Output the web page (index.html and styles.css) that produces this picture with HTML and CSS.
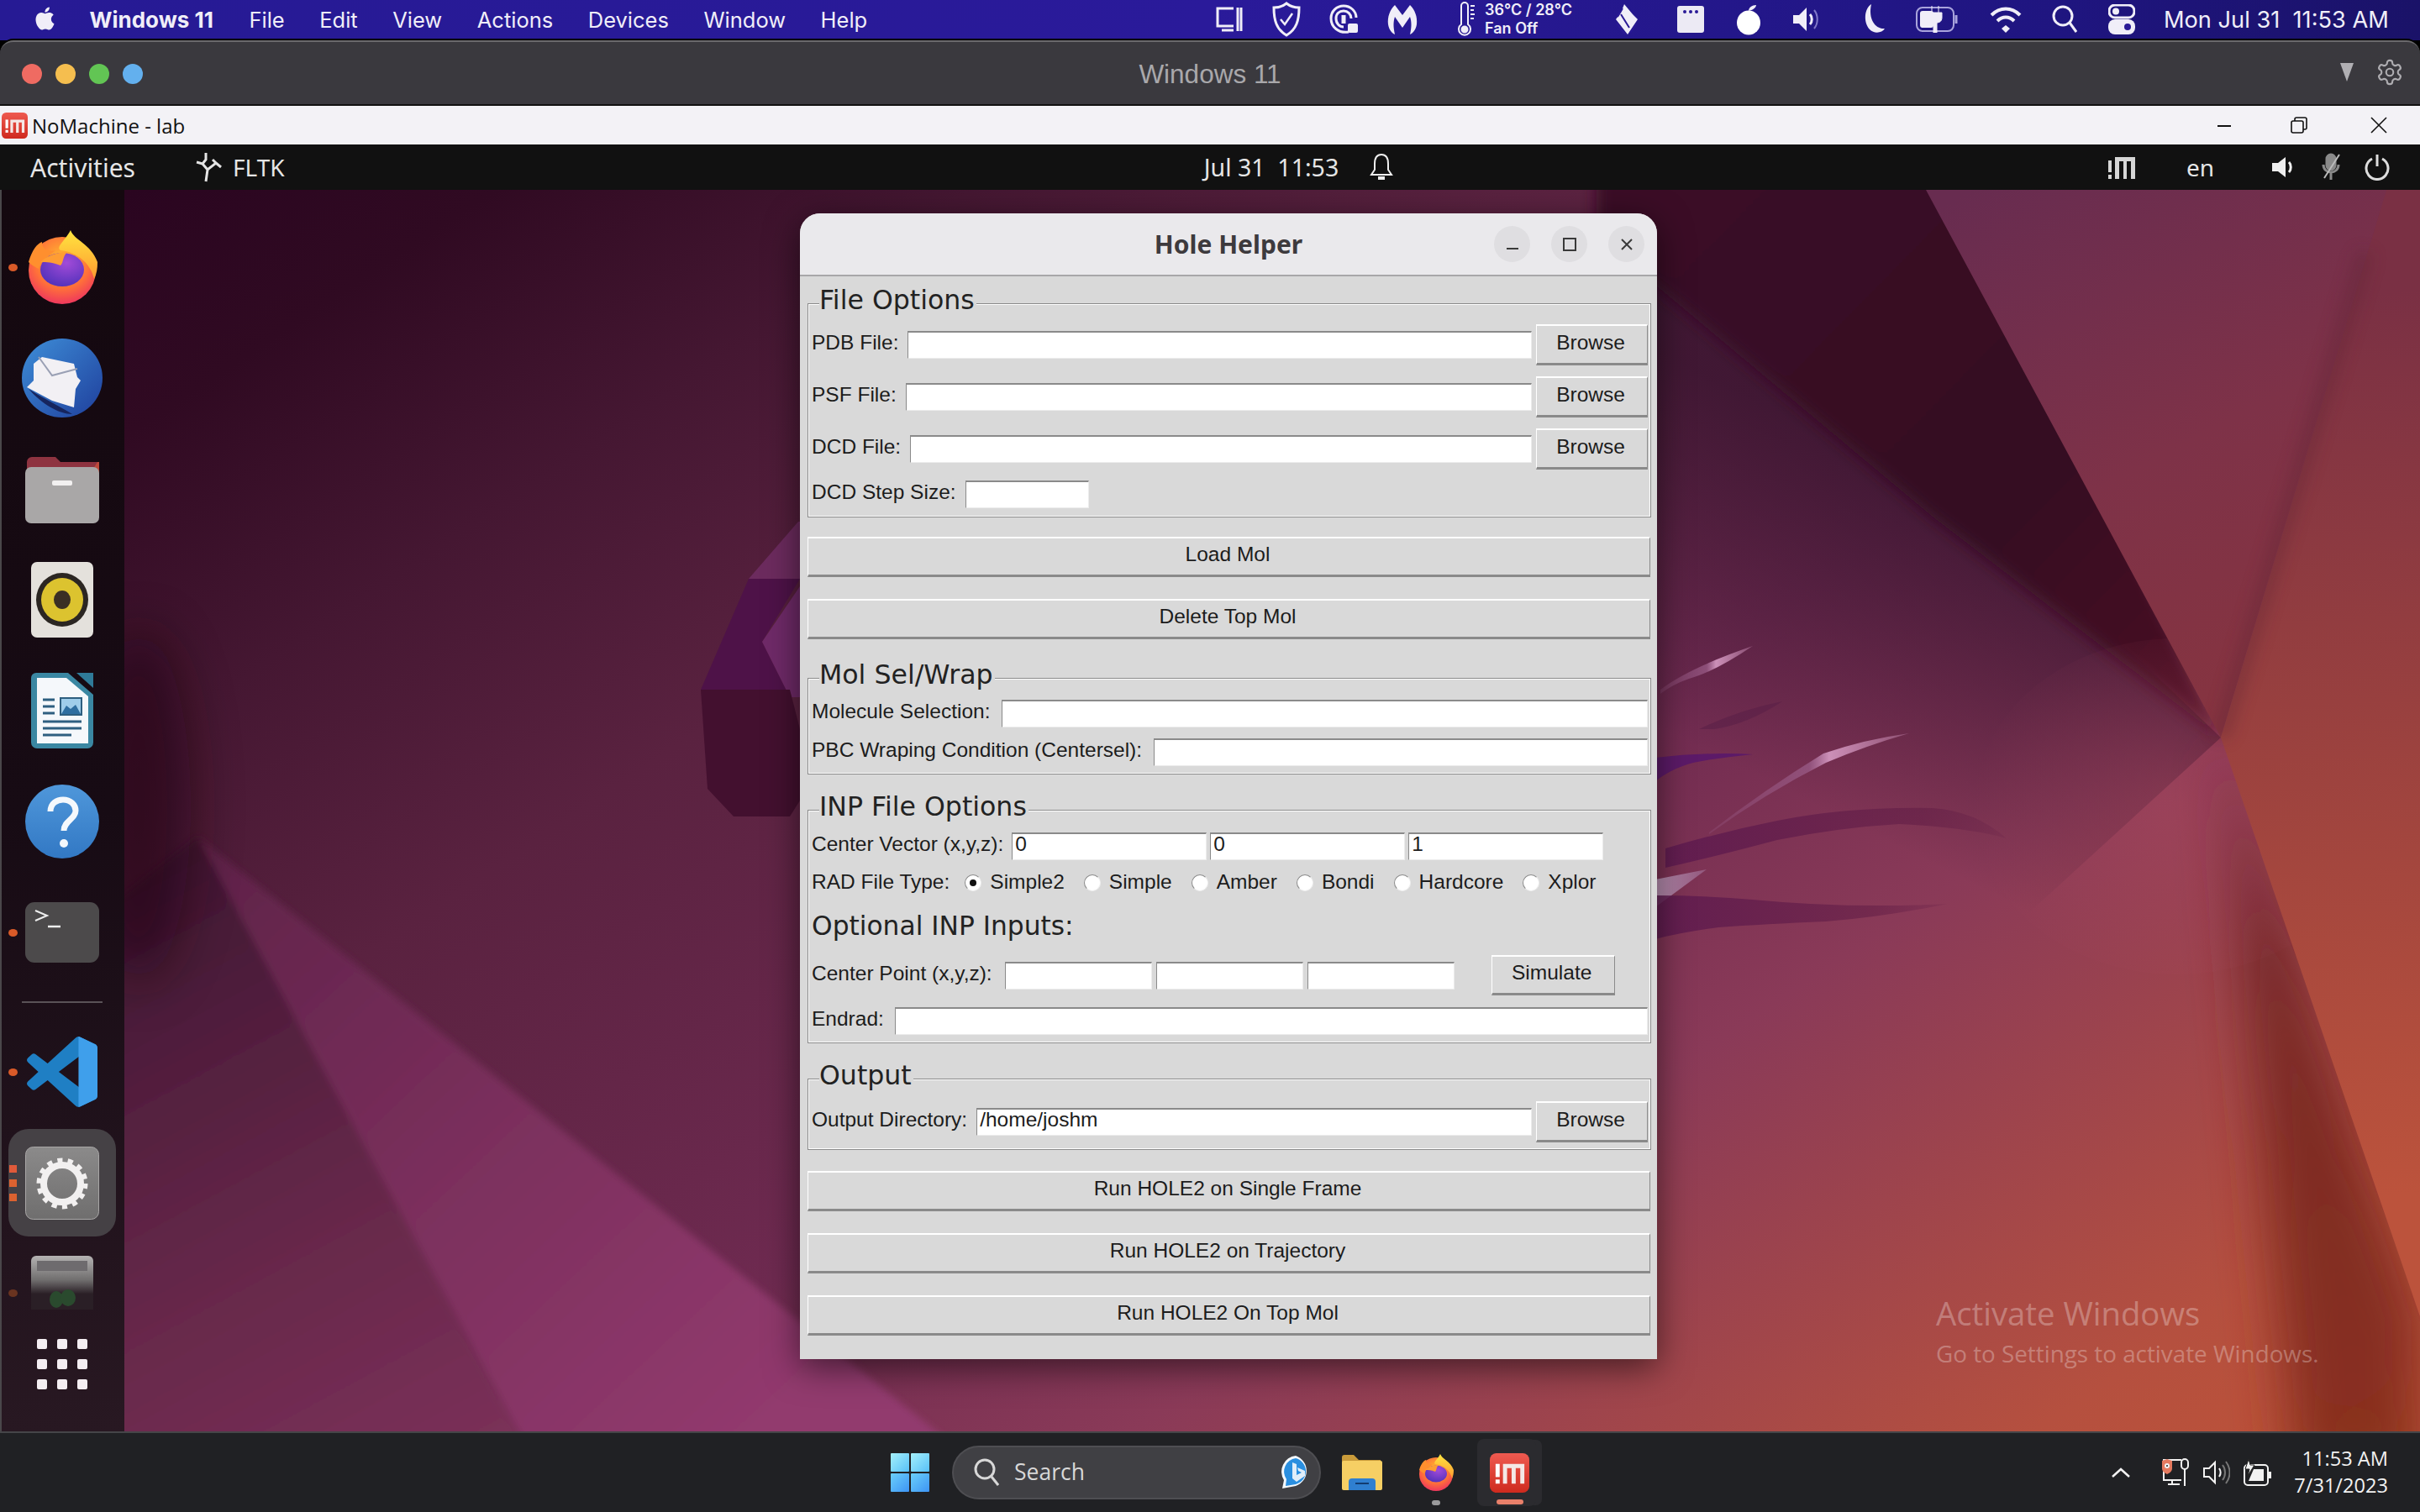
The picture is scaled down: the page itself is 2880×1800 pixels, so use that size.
FILE: index.html
```html
<!DOCTYPE html>
<html lang="en">
<head>
<meta charset="utf-8">
<title>Hole Helper</title>
<link rel="stylesheet" href="styles.css">
</head>
<body>
<svg class="defs" width="0" height="0" aria-hidden="true">
  <defs>
    <linearGradient id="nmRed" x1="0" y1="0" x2="0" y2="1"><stop offset="0" stop-color="#ee5a50"/><stop offset="1" stop-color="#cf2a1e"/></linearGradient>
    <radialGradient id="ffBody" cx=".5" cy=".35" r=".75"><stop offset="0" stop-color="#ffc02e"/><stop offset=".55" stop-color="#ff7139"/><stop offset="1" stop-color="#e8206c"/></radialGradient>
    <linearGradient id="ffFlare" x1="0" y1="0" x2="0" y2="1"><stop offset="0" stop-color="#ffe640"/><stop offset="1" stop-color="#ff9a30"/></linearGradient>
    <radialGradient id="ffCore" cx=".6" cy=".3" r=".8"><stop offset="0" stop-color="#a24bd8"/><stop offset="1" stop-color="#4b2fb8"/></radialGradient>
    <symbol id="nomachine" viewBox="0 0 48 48">
      <rect x="0" y="0" width="48" height="48" rx="8" fill="url(#nmRed)"/>
      <rect x="7" y="13" width="5" height="16" fill="#fff"/><rect x="7" y="32" width="5" height="5" fill="#fff"/>
      <path d="M16 13H42V37H37V18H31.5V37H26.5V18H21V37H16Z" fill="#f4e8e6"/>
    </symbol>
    <symbol id="firefox" viewBox="0 0 84 88">
      <circle cx="42" cy="48" r="40" fill="url(#ffBody)"/>
      <path d="M52 0C56 12 76 16 84 38C84 46 83 52 80 58C76 40 60 26 40 24C34 20 46 12 52 0Z" fill="url(#ffFlare)"/>
      <path d="M2 38C6 24 12 16 18 14C18 22 24 26 34 24C26 30 18 36 14 46C10 44 6 42 2 38Z" fill="#ff8f2e"/>
      <ellipse cx="42" cy="47" rx="26" ry="20" fill="url(#ffCore)"/>
      <path d="M16 38C24 30 38 26 48 26C42 32 44 38 40 42C30 38 24 38 16 38Z" fill="#ff9d33"/>
    </symbol>
  </defs>
</svg>

<div class="screen">
  <header class="menubar">
    <nav class="app-menu">
      <svg class="apple" width="27" height="32" viewBox="0 0 24 24"><path fill="#f0eef8" d="M12.152 6.896c-.948 0-2.415-1.078-3.96-1.04-2.04.027-3.91 1.183-4.961 3.014-2.117 3.675-.546 9.103 1.519 12.09 1.013 1.454 2.208 3.09 3.792 3.039 1.52-.065 2.09-.987 3.935-.987 1.831 0 2.35.987 3.96.948 1.637-.026 2.676-1.48 3.676-2.948 1.156-1.688 1.636-3.325 1.662-3.415-.039-.013-3.182-1.221-3.22-4.857-.026-3.04 2.48-4.494 2.597-4.559-1.429-2.09-3.623-2.324-4.39-2.376-2-.156-3.675 1.09-4.61 1.09zM15.53 3.83c.843-1.012 1.4-2.427 1.245-3.83-1.207.052-2.662.805-3.532 1.818-.78.896-1.454 2.338-1.273 3.714 1.338.104 2.715-.688 3.559-1.701"/></svg>
      <span class="app-name">Windows 11</span>
      <span>File</span><span>Edit</span><span>View</span><span>Actions</span><span>Devices</span><span>Window</span><span>Help</span>
    </nav>
    <div class="status-strip">
      <svg width="36" height="36" viewBox="0 0 36 36" fill="none" stroke="#f0eef8" stroke-width="3"><path d="M24 5H5V26H24"/><path d="M29 4V32M33 4V32"/><path d="M10 31H24"/></svg>
      <svg width="36" height="42" viewBox="0 0 36 42" fill="none" stroke="#f0eef8" stroke-width="3"><path d="M18 2C23 6 28 7 33 7C33 22 30 33 18 40C6 33 3 22 3 7C8 7 13 6 18 2Z"/><path d="M11 21L16 27L25 14" stroke-width="2.5"/></svg>
      <svg width="36" height="38" viewBox="0 0 36 38" fill="none" stroke="#f0eef8" stroke-width="3"><path d="M24 34C12 36 3 28 3 18C3 9 10 3 18 3C26 3 33 9 33 17"/><path d="M18 28C13 28 9 24 9 18C9 12 13 9 18 9C23 9 27 13 27 18"/><path d="M18 14V24" stroke-width="5"/><rect x="23" y="24" width="12" height="11" rx="2" fill="#f0eef8" stroke="none"/></svg>
      <svg width="38" height="38" viewBox="0 0 38 38"><path fill="#f0eef8" d="M10 2L19 14L28 2C34 8 37 16 36 25C35 31 32 35 28 37C30 28 30 22 28 16L19 29L10 16C8 22 8 28 10 37C6 35 3 31 2 25C1 16 4 8 10 2Z"/></svg>
      <div class="temp-group">
        <svg width="22" height="42" viewBox="0 0 22 42" fill="none" stroke="#f0eef8" stroke-width="2"><path d="M5 27V5A4 4 0 0 1 13 5V27A7 7 0 1 1 5 27Z"/><circle cx="9" cy="33" r="3.5" fill="#f0eef8"/><path d="M16 5H21M16 10H20M16 15H21M16 20H20"/></svg>
        <div class="temp-text"><span>36°C / 28°C</span><span>Fan Off</span></div>
      </div>
      <svg width="34" height="40" viewBox="0 0 34 40"><path fill="#f0eef8" d="M14 2L24 14L30 20L18 38L4 20L10 12Z"/><path d="M5 25L15 38M12 7L6 17M28 26L21 36M10 14L20 30" stroke="#2a1a96" stroke-width="2" fill="none"/></svg>
      <svg width="32" height="32" viewBox="0 0 32 32"><rect width="32" height="32" rx="3" fill="#eceaf4"/><circle cx="9" cy="7" r="2" fill="#2a1a96"/><circle cx="16" cy="7" r="2" fill="#2a1a96"/><circle cx="23" cy="7" r="2" fill="#2a1a96"/></svg>
      <svg width="30" height="38" viewBox="0 0 30 38"><ellipse cx="15" cy="23" rx="14" ry="14.5" fill="#fff"/><path d="M15 9C15 5 19 2 24 2C24 5 20 8 15 9Z" fill="#f0eef8"/></svg>
      <svg width="38" height="32" viewBox="0 0 38 32"><path fill="#f0eef8" d="M2 11H9L18 2V30L9 21H2Z"/><path d="M22 10C25 13 25 19 22 22" fill="none" stroke="#f0eef8" stroke-width="3"/><path d="M27 5C32 11 32 21 27 27" fill="none" stroke="#8078c8" stroke-width="2"/></svg>
      <svg width="30" height="38" viewBox="0 0 30 38"><path fill="#f0eef8" d="M13 1C5 6 3 22 11 31C17 37 26 35 29 30C18 31 9 19 13 1Z"/></svg>
      <svg width="52" height="32" viewBox="0 0 52 32" fill="none"><rect x="1" y="2" width="44" height="28" rx="7" stroke="#a9a4dc" stroke-width="2"/><path d="M48 11V21" stroke="#a9a4dc" stroke-width="3"/><rect x="5" y="6" width="16" height="20" rx="3" fill="#f0eef8"/><path d="M19 0V8M27 0V8M15 8H31V14C31 19 27 20 25 20V32H21V20C19 20 15 19 15 14Z" fill="#f0eef8" stroke="#f0eef8"/></svg>
      <svg width="38" height="32" viewBox="0 0 38 32" fill="none" stroke="#f0eef8" stroke-width="4"><path d="M2 11C12 1 26 1 36 11"/><path d="M9 18C15 12 23 12 29 18"/><path d="M19 23L24 27L19 32L14 27Z" fill="#f0eef8" stroke="none"/></svg>
      <svg width="30" height="34" viewBox="0 0 30 34" fill="none" stroke="#f0eef8" stroke-width="3"><circle cx="13" cy="13" r="11"/><path d="M21 21L29 32"/></svg>
      <svg width="32" height="36" viewBox="0 0 32 36"><rect x="1" y="1" width="30" height="15" rx="7" fill="none" stroke="#f0eef8" stroke-width="3"/><circle cx="9" cy="8.5" r="4" fill="#f0eef8"/><rect y="18" width="32" height="18" rx="8" fill="#f0eef8"/><circle cx="23" cy="27" r="4" fill="#2a1a96"/></svg>
      <span class="clock">Mon Jul 31  11:53 AM</span>
    </div>
  </header>

  <div class="vm-titlebar">
    <div class="traffic">
      <span class="light light-red"></span><span class="light light-amber"></span><span class="light light-green"></span><span class="light light-blue"></span>
    </div>
    <span class="vm-title">Windows 11</span>
    <div class="vm-tools">
      <svg width="16" height="22" viewBox="0 0 16 22"><path d="M0 0H16L8 22Z" fill="#b0afb3"/></svg>
      <svg width="34" height="34" viewBox="0 0 24 24" fill="none" stroke="#aeadb1" stroke-width="1.5"><path d="M12.22 2h-.44a2 2 0 0 0-2 2v.18a2 2 0 0 1-1 1.73l-.43.25a2 2 0 0 1-2 0l-.15-.08a2 2 0 0 0-2.73.73l-.22.38a2 2 0 0 0 .73 2.73l.15.1a2 2 0 0 1 1 1.72v.51a2 2 0 0 1-1 1.74l-.15.09a2 2 0 0 0-.73 2.73l.22.38a2 2 0 0 0 2.73.73l.15-.08a2 2 0 0 1 2 0l.43.25a2 2 0 0 1 1 1.73V20a2 2 0 0 0 2 2h.44a2 2 0 0 0 2-2v-.18a2 2 0 0 1 1-1.73l.43-.25a2 2 0 0 1 2 0l.15.08a2 2 0 0 0 2.73-.73l.22-.39a2 2 0 0 0-.73-2.73l-.15-.08a2 2 0 0 1-1-1.74v-.5a2 2 0 0 1 1-1.74l.15-.09a2 2 0 0 0 .73-2.73l-.22-.38a2 2 0 0 0-2.73-.73l-.15.08a2 2 0 0 1-2 0l-.43-.25a2 2 0 0 1-1-1.73V4a2 2 0 0 0-2-2z"/><circle cx="12" cy="12" r="3"/></svg>
    </div>
  </div>

  <div class="nm-titlebar">
    <svg width="31" height="31" class="nm-icon"><use href="#nomachine"/></svg>
    <span class="nm-title">NoMachine - lab</span>
    <div class="nm-controls">
      <svg width="20" height="20" viewBox="0 0 20 20"><path d="M2 11H18" stroke="#111" stroke-width="2"/></svg>
      <svg class="nm-restore" width="20" height="20" viewBox="0 0 20 20" fill="none" stroke="#111" stroke-width="1.6"><rect x="1" y="5" width="14" height="14" rx="2"/><path d="M5 5V3A2 2 0 0 1 7 1H17A2 2 0 0 1 19 3V13A2 2 0 0 1 17 15H15"/></svg>
      <svg width="20" height="20" viewBox="0 0 20 20" stroke="#111" stroke-width="1.6"><path d="M1 1L19 19M19 1L1 19"/></svg>
    </div>
  </div>

  <div class="gnome-bar">
    <div class="gnome-left">
      <span class="activities">Activities</span>
      <span class="gnome-app">
        <svg width="34" height="36" viewBox="0 0 34 36" stroke="#e4e4e4" stroke-width="3" fill="none"><path d="M14 1V9L10 14L3 12M10 14L16 21L26 13L32 18M16 21L14 35M26 13L22 9"/></svg>
        FLTK
      </span>
    </div>
    <div class="gnome-center">
      <span class="gnome-clock">Jul 31  11:53</span>
      <svg width="30" height="34" viewBox="0 0 30 34" fill="none" stroke="#eee" stroke-width="2"><path d="M15 2C9 2 7 7 7 13V20L3 26H27L23 20V13C23 7 21 2 15 2Z"/><path d="M11 30H19" stroke-width="4"/></svg>
    </div>
    <div class="gnome-right">
      <svg width="32" height="32" viewBox="0 0 32 32"><rect x="0" y="8" width="4" height="14" fill="#d6d6d6"/><rect x="0" y="25" width="4" height="5" fill="#d6d6d6"/><path d="M8 4H32V30H27V9H22V30H18V9H13V30H8Z" fill="#d6d6d6"/></svg>
      <span class="lang">en</span>
      <svg width="32" height="32" viewBox="0 0 32 32"><path fill="#eee" d="M2 11H9L18 4V28L9 21H2Z"/><path d="M22 10C25 13 25 19 22 22" fill="none" stroke="#eee" stroke-width="3"/></svg>
      <svg width="24" height="34" viewBox="0 0 24 34" fill="none" stroke="#8a8a8a" stroke-width="3"><rect x="7" y="2" width="10" height="18" rx="5" fill="#8a8a8a"/><path d="M3 14C3 26 21 26 21 14M12 24V32"/><path d="M22 2L4 30" stroke="#bbb" stroke-width="2"/></svg>
      <svg width="30" height="32" viewBox="0 0 30 32" fill="none" stroke="#ddd" stroke-width="3"><path d="M9 6A13 13 0 1 0 21 6"/><path d="M15 1V15"/></svg>
    </div>
  </div>

  <main class="desktop">
    <svg class="wallpaper" viewBox="0 226 2880 1478" preserveAspectRatio="none" aria-hidden="true">
      <defs>
        <linearGradient id="wpBase" gradientUnits="userSpaceOnUse" x1="150" y1="226" x2="1650" y2="2476">
          <stop offset="0" stop-color="#2a0520"/><stop offset=".09" stop-color="#300a22"/><stop offset=".207" stop-color="#451732"/><stop offset=".338" stop-color="#5a2240"/><stop offset=".556" stop-color="#6e2a50"/><stop offset=".7" stop-color="#8a3a58"/><stop offset=".92" stop-color="#b5503f"/><stop offset="1" stop-color="#bc5238"/>
        </linearGradient>
        <linearGradient id="wpBand" gradientUnits="userSpaceOnUse" x1="235" y1="996" x2="900" y2="1704"><stop offset="0" stop-color="#5e2248"/><stop offset=".5" stop-color="#7a2f5c"/><stop offset="1" stop-color="#923a6e"/></linearGradient>
        <linearGradient id="wpLow" gradientUnits="userSpaceOnUse" x1="220" y1="1000" x2="600" y2="1704"><stop offset="0" stop-color="#3f1632"/><stop offset=".6" stop-color="#66284a"/><stop offset="1" stop-color="#7a3058"/></linearGradient>
        <linearGradient id="wpWedge" gradientUnits="userSpaceOnUse" x1="2000" y1="240" x2="2640" y2="870"><stop offset="0" stop-color="#3a1028"/><stop offset=".6" stop-color="#350f20"/><stop offset="1" stop-color="#4c1020"/></linearGradient>
        <linearGradient id="wpShade" gradientUnits="userSpaceOnUse" x1="2200" y1="530" x2="2020" y2="890"><stop offset="0" stop-color="#3a1530" stop-opacity=".85"/><stop offset="1" stop-color="#3a1530" stop-opacity="0"/></linearGradient>
        <linearGradient id="wpFacetA" gradientUnits="userSpaceOnUse" x1="2320" y1="240" x2="2640" y2="860"><stop offset="0" stop-color="#682c50"/><stop offset=".55" stop-color="#7e3248"/><stop offset="1" stop-color="#863440"/></linearGradient>
        <linearGradient id="wpFacetB" gradientUnits="userSpaceOnUse" x1="2800" y1="350" x2="2880" y2="1420"><stop offset="0" stop-color="#7a3044"/><stop offset=".45" stop-color="#98403f"/><stop offset="1" stop-color="#bc533c"/></linearGradient>
        <linearGradient id="wpCrease" gradientUnits="userSpaceOnUse" x1="2650" y1="900" x2="2850" y2="1700"><stop offset="0" stop-color="#5a1c2a"/><stop offset=".4" stop-color="#7a2a26"/><stop offset="1" stop-color="#8a301f"/></linearGradient>
        <radialGradient id="wpGlow" gradientUnits="userSpaceOnUse" cx="2590" cy="960" r="240"><stop offset="0" stop-color="#ac4a60" stop-opacity=".4"/><stop offset="1" stop-color="#ac4a60" stop-opacity="0"/></radialGradient>
        <linearGradient id="fDark" x1="0" y1="0" x2="1" y2="0"><stop offset="0" stop-color="#5e1a50" stop-opacity=".85"/><stop offset=".75" stop-color="#5e1a44" stop-opacity=".5"/><stop offset="1" stop-color="#5e1a44" stop-opacity=".15"/></linearGradient>
        <linearGradient id="fLight" x1="0" y1="0" x2="1" y2="0"><stop offset="0" stop-color="#9a5c88" stop-opacity=".25"/><stop offset=".5" stop-color="#9a5c88" stop-opacity=".75"/><stop offset=".6" stop-color="#cc90b8"/><stop offset="1" stop-color="#cc90b8" stop-opacity=".35"/></linearGradient>
        <linearGradient id="fPale" x1="0" y1="0" x2="1" y2="0"><stop offset="0" stop-color="#ba92b4"/><stop offset="1" stop-color="#a87ca4" stop-opacity=".5"/></linearGradient>
        <filter id="blurT" filterUnits="userSpaceOnUse" x="0" y="0" width="2880" height="1800"><feGaussianBlur stdDeviation="4"/></filter>
        <filter id="blurS" filterUnits="userSpaceOnUse" x="0" y="0" width="2880" height="1800"><feGaussianBlur stdDeviation="9"/></filter>
        <filter id="blurL" filterUnits="userSpaceOnUse" x="0" y="0" width="2880" height="1800"><feGaussianBlur stdDeviation="30"/></filter>
      </defs>
      <rect x="0" y="226" width="2880" height="1478" fill="url(#wpBase)"/>
      <g filter="url(#blurT)">
        <polygon points="235,996 615,1704 615,1780 0,1780 0,1180" fill="url(#wpLow)"/>
        <polygon points="235,996 1190,1765 650,1765" fill="url(#wpBand)"/>
      </g>
      <ellipse cx="165" cy="960" rx="62" ry="210" fill="#1c0510" opacity=".55" filter="url(#blurL)"/>
      <polygon points="891,689 950,621 960,621 960,689" fill="#6c2b5e"/>
      <polygon points="891,689 952,689 907,764 940,830 834,821" fill="#4e1248"/>
      <polygon points="907,764 952,698 952,830 940,830" fill="#6f2a68"/>
      <polygon points="834,821 940,821 952,868 952,953 940,972 873,972 842,939" fill="#43102f"/>
      <polygon points="1960,226 2643,878 2400,1100 1960,1100" fill="url(#wpShade)"/>
      <polygon points="1900,100 2292,100 2643,878 2300,615 1970,339 1900,300" fill="url(#wpWedge)" filter="url(#blurS)"/>
      <polygon points="2643,878 2880,1567 2880,1760 2730,1760" fill="url(#wpCrease)" filter="url(#blurL)"/>
      <ellipse cx="2590" cy="960" rx="240" ry="200" fill="url(#wpGlow)"/>
      <polygon points="2292,226 2840,226 2643,878" fill="url(#wpFacetA)"/>
      <polygon points="2840,226 2880,226 2880,1567 2643,878" fill="url(#wpFacetB)"/>
      <path d="M2643 878L2815 300" stroke="#5c2030" stroke-width="20" opacity=".35" filter="url(#blurS)"/>
      <path d="M1976 821Q2010 795 2086 769Q2040 800 2010 808Q1990 815 1976 826Z" fill="url(#fLight)"/>
      <path d="M2022 868Q2070 845 2121 835Q2080 862 2040 868Z" fill="#5a1f48" opacity=".6"/>
      <path d="M1970 902Q2030 895 2086 898Q2020 905 2005 911Q1985 918 1970 930Z" fill="#5c1a68"/>
      <path d="M2034 991Q2100 940 2170 897Q2220 880 2272 873Q2220 888 2173 908Q2100 945 2034 993Z" fill="url(#fLight)"/>
      <path d="M1982 1010Q2050 990 2115 977Q2200 960 2300 962Q2350 965 2388 998Q2340 985 2260 981Q2190 985 2115 1000Q2040 1020 1982 1033Z" fill="url(#fDark)"/>
      <path d="M1970 1047L2031 1035L1970 1080Z" fill="url(#fPale)"/>
      <path d="M1970 1066Q2030 1066 2086 1071Q2200 1082 2318 1076Q2240 1092 2173 1097Q2100 1100 2045 1104Q2000 1110 1970 1118Z" fill="url(#fDark)"/>
    </svg>

    <aside class="dock">
      <div class="dock-item has-dot">
        <svg width="84" height="88"><use href="#firefox"/></svg>
      </div>
      <div class="dock-item">
        <svg width="96" height="94" viewBox="0 0 96 94"><defs><linearGradient id="tbBlue" x1="0" y1="0" x2="1" y2="1"><stop offset="0" stop-color="#3e8ed8"/><stop offset="1" stop-color="#1f3f9c"/></linearGradient></defs><ellipse cx="48" cy="47" rx="48" ry="47" fill="url(#tbBlue)"/><path d="M14 30L24 22L62 30L66 46L70 50L64 60L62 82L36 74L6 58L14 50Z" fill="#f2f0f4"/><path d="M20 22L36 44L66 36" fill="none" stroke="#9aa0b4" stroke-width="2"/><path d="M8 60C24 78 44 90 60 90C48 82 30 74 8 60Z" fill="#16255e"/></svg>
      </div>
      <div class="dock-item">
        <svg width="88" height="81" viewBox="0 0 88 81"><path d="M2 8A6 6 0 0 1 8 2H36L42 8H88V24H2Z" fill="#8e3340"/><path d="M86 8H88V24H76Z" fill="#bd4a3c"/><rect y="14" width="88" height="67" rx="7" fill="#a9a7a7"/><rect x="32" y="30" width="24" height="6" rx="2" fill="#f2f0f0"/></svg>
      </div>
      <div class="dock-item">
        <svg width="74" height="90" viewBox="0 0 74 90"><rect width="74" height="90" rx="7" fill="#e4e1dc"/><ellipse cx="37" cy="45" rx="31" ry="32" fill="#2b2622"/><ellipse cx="37" cy="45" rx="25" ry="26" fill="#dcc32f"/><ellipse cx="37" cy="45" rx="10" ry="11" fill="#3a2f24"/></svg>
      </div>
      <div class="dock-item">
        <svg width="74" height="90" viewBox="0 0 74 90"><path d="M6 0H44L74 26V83A7 7 0 0 1 67 90H7A7 7 0 0 1 0 83V6A6 6 0 0 1 6 0Z" fill="#3a87a2"/><path d="M54 0H74V18Z" fill="#2f7a98"/><path d="M7 6H42L68 28V84H7Z" fill="#f5f8fb"/><path d="M14 32H28M14 40H28M14 48H28M14 58H60M14 66H60M14 74H48" stroke="#2e5f80" stroke-width="3"/><rect x="35" y="30" width="25" height="20" fill="#9fcdea" stroke="#2e5f80" stroke-width="2"/><path d="M36 49L42 39L47 43L53 38L59 49Z" fill="#2e6ea0"/></svg>
      </div>
      <div class="dock-item">
        <svg width="88" height="88" viewBox="0 0 88 88"><defs><linearGradient id="helpBlue" x1="0" y1="0" x2="0" y2="1"><stop offset="0" stop-color="#4f97da"/><stop offset="1" stop-color="#3278c4"/></linearGradient></defs><circle cx="44" cy="44" r="44" fill="url(#helpBlue)"/><path d="M30 32C30 22 38 18 45 18C54 18 60 24 60 31C60 41 46 43 46 55" fill="none" stroke="#f4f8fc" stroke-width="7"/><circle cx="46" cy="70" r="5" fill="#f4f8fc"/></svg>
      </div>
      <div class="dock-item has-dot">
        <svg width="88" height="72" viewBox="0 0 88 72"><rect width="88" height="72" rx="11" fill="#4c4a4b"/><path d="M12 10L26 16L12 22" fill="none" stroke="#eee" stroke-width="2"/><path d="M27 29H42" stroke="#eee" stroke-width="2.5"/></svg>
      </div>
      <div class="dock-sep"></div>
      <div class="dock-item has-dot">
        <svg width="84" height="84" viewBox="0 0 24 24"><defs><clipPath id="vsRight"><path d="M17.5 0H24V24H17.5Z"/></clipPath></defs><path fill="#1f7fc4" d="M23.15 2.587L18.21.21a1.494 1.494 0 0 0-1.705.29l-9.46 8.63-4.12-3.128a.999.999 0 0 0-1.276.057L.327 7.261A1 1 0 0 0 .326 8.74L3.899 12 .326 15.26a1 1 0 0 0 .001 1.479L1.65 17.94a.999.999 0 0 0 1.276.057l4.12-3.128 9.46 8.63a1.492 1.492 0 0 0 1.704.29l4.942-2.377A1.5 1.5 0 0 0 24 20.06V3.939a1.5 1.5 0 0 0-.85-1.352zm-5.146 14.861L10.826 12l7.178-5.448v10.896z"/><path clip-path="url(#vsRight)" fill="#3f9feb" d="M23.15 2.587L18.21.21a1.494 1.494 0 0 0-1.705.29L17.5 0V24L18.21 23.79 23.15 21.41A1.5 1.5 0 0 0 24 20.06V3.939a1.5 1.5 0 0 0-.85-1.352z"/></svg>
      </div>
      <div class="dock-item is-active has-dots">
        <span class="active-plate">
          <svg width="88" height="87" viewBox="0 0 88 87"><defs><linearGradient id="setBg" x1="0" y1="0" x2="0" y2="1"><stop offset="0" stop-color="#8b8a8a"/><stop offset="1" stop-color="#6f6e6e"/></linearGradient></defs><rect x=".5" y=".5" width="87" height="86" rx="9" fill="url(#setBg)" stroke="#a8a6a6"/><circle cx="44" cy="44" r="22" fill="none" stroke="#f2f0f0" stroke-width="8"/><circle cx="44" cy="44" r="27" fill="none" stroke="#f2f0f0" stroke-width="7" stroke-dasharray="6 6.12"/></svg>
        </span>
      </div>
      <div class="dock-item dock-item-trash has-dot dim-dot">
        <svg width="74" height="90" viewBox="0 0 74 90"><defs><linearGradient id="trashBg" x1="0" y1="0" x2="0" y2="1"><stop offset="0" stop-color="#b5b3b3"/><stop offset=".45" stop-color="#706e6e"/><stop offset=".71" stop-color="#2a1f26"/></linearGradient></defs><path d="M6 0H68A6 6 0 0 1 74 6V64H0V6A6 6 0 0 1 6 0Z" fill="url(#trashBg)"/><rect x="7" y="6" width="60" height="12" fill="#6e6b6e"/><ellipse cx="30" cy="52" rx="8" ry="10" fill="#2a4a2e"/><ellipse cx="44" cy="50" rx="9" ry="10" fill="#2a4a2e"/></svg>
      </div>
      <div class="app-grid"><i></i><i></i><i></i><i></i><i></i><i></i><i></i><i></i><i></i></div>
    </aside>

    <section class="tk-window">
      <header class="tk-titlebar">
        <h1>Hole Helper</h1>
        <div class="tk-controls">
          <span class="tk-ctl"><svg width="16" height="16" viewBox="0 0 16 16"><path d="M1 13H15" stroke="#3a3a3a" stroke-width="2"/></svg></span>
          <span class="tk-ctl"><svg width="16" height="16" viewBox="0 0 16 16"><rect x="1" y="1" width="14" height="14" fill="none" stroke="#3a3a3a" stroke-width="2"/></svg></span>
          <span class="tk-ctl"><svg width="16" height="16" viewBox="0 0 16 16"><path d="M2 2L14 14M14 2L2 14" stroke="#3a3a3a" stroke-width="2"/></svg></span>
        </div>
      </header>
      <div class="tk-body">
        <fieldset class="frame frame-file">
          <legend>File Options</legend>
          <div class="row row-browse"><span class="lbl">PDB File:</span><div class="entry grow"></div><button class="btn btn-browse">Browse</button></div>
          <div class="row row-browse"><span class="lbl">PSF File:</span><div class="entry grow"></div><button class="btn btn-browse">Browse</button></div>
          <div class="row row-browse"><span class="lbl">DCD File:</span><div class="entry grow"></div><button class="btn btn-browse">Browse</button></div>
          <div class="row"><span class="lbl">DCD Step Size:</span><div class="entry entry-step"></div></div>
        </fieldset>
        <button class="btn btn-wide btn-load">Load Mol</button>
        <button class="btn btn-wide btn-next">Delete Top Mol</button>

        <fieldset class="frame frame-mol">
          <legend>Mol Sel/Wrap</legend>
          <div class="row row-wide-gap"><span class="lbl">Molecule Selection:</span><div class="entry grow"></div></div>
          <div class="row row-wide-gap"><span class="lbl">PBC Wraping Condition (Centersel):</span><div class="entry grow"></div></div>
        </fieldset>

        <fieldset class="frame frame-inp">
          <legend>INP File Options</legend>
          <div class="row row-vector"><span class="lbl">Center Vector (x,y,z):</span>
            <div class="triple triple-vector"><div class="entry">0</div><div class="entry">0</div><div class="entry">1</div></div>
          </div>
          <div class="row row-radio"><span class="lbl">RAD File Type:</span>
            <div class="radios">
              <label class="radio"><i class="dot is-on"></i>Simple2</label>
              <label class="radio"><i class="dot"></i>Simple</label>
              <label class="radio"><i class="dot"></i>Amber</label>
              <label class="radio"><i class="dot"></i>Bondi</label>
              <label class="radio"><i class="dot"></i>Hardcore</label>
              <label class="radio"><i class="dot"></i>Xplor</label>
            </div>
          </div>
          <h2 class="subhead">Optional INP Inputs:</h2>
          <div class="row row-point"><span class="lbl">Center Point (x,y,z):</span>
            <div class="triple triple-point"><div class="entry"></div><div class="entry"></div><div class="entry"></div></div>
            <button class="btn btn-sim">Simulate</button>
          </div>
          <div class="row row-endrad"><span class="lbl">Endrad:</span><div class="entry grow"></div></div>
        </fieldset>

        <fieldset class="frame frame-out">
          <legend>Output</legend>
          <div class="row row-browse"><span class="lbl">Output Directory:</span><div class="entry grow">/home/joshm</div><button class="btn btn-browse">Browse</button></div>
        </fieldset>

        <button class="btn btn-wide btn-run">Run HOLE2 on Single Frame</button>
        <button class="btn btn-wide btn-next">Run HOLE2 on Trajectory</button>
        <button class="btn btn-wide btn-next">Run HOLE2 On Top Mol</button>
      </div>
    </section>

    <div class="activate">
      <p class="activate-head">Activate Windows</p>
      <p class="activate-sub">Go to Settings to activate Windows.</p>
    </div>
  </main>

  <footer class="taskbar">
    <div class="task-center">
      <svg width="46" height="46" viewBox="0 0 46 46"><defs><linearGradient id="winA" x1="0" y1="0" x2="1" y2="1"><stop offset="0" stop-color="#a4f0fb"/><stop offset="1" stop-color="#58c0f8"/></linearGradient><linearGradient id="winB" x1="0" y1="0" x2="1" y2="1"><stop offset="0" stop-color="#6bd0fa"/><stop offset="1" stop-color="#3d94f5"/></linearGradient></defs><rect width="22" height="22" rx="1" fill="url(#winA)"/><rect x="24" width="22" height="22" rx="1" fill="url(#winA)"/><rect y="24" width="22" height="22" rx="1" fill="url(#winB)"/><rect x="24" y="24" width="22" height="22" rx="1" fill="url(#winB)"/></svg>
      <div class="search">
        <svg width="30" height="34" viewBox="0 0 30 34" fill="none" stroke="#d8d8d8" stroke-width="3"><circle cx="13" cy="14" r="11"/><path d="M21 23L29 33"/></svg>
        <span class="search-text">Search</span>
        <svg class="bing" width="40" height="40" viewBox="0 0 40 40"><path d="M20 1A19 19 0 0 1 20 37L4 40L6 30A19 19 0 0 1 20 1Z" fill="#f4f8fc"/><path d="M20 4A16 16 0 0 1 20 35L8 37L9 29A16 16 0 0 1 20 4Z" fill="#2a8fe0"/><path d="M16 9L21 11V24L27 21L23 19L22 15L31 19V25L21 32L16 28Z" fill="#f4f8fc" opacity=".9"/></svg>
      </div>
      <svg class="task-folder" width="48" height="42" viewBox="0 0 48 42"><path d="M0 3A3 3 0 0 1 3 0H14L20 6H46V14H0Z" fill="#c99b3a"/><rect y="7" width="48" height="35" rx="2" fill="#f6cf64"/><path d="M8 42V32A4 4 0 0 1 12 28H36A4 4 0 0 1 40 32V42Z" fill="#2f7fd0"/><path d="M16 34H32" stroke="#123c70" stroke-width="2"/></svg>
      <span class="task-firefox">
        <svg width="42" height="44"><use href="#firefox"/></svg>
        <i class="task-running"></i>
      </span>
      <span class="task-active">
        <svg width="47" height="47"><use href="#nomachine"/></svg>
        <i class="task-open"></i>
      </span>
    </div>
    <div class="tray">
      <svg width="22" height="12" viewBox="0 0 22 12" fill="none" stroke="#f2f2f2" stroke-width="2.5"><path d="M1 11L11 2L21 11"/></svg>
      <svg width="34" height="34" viewBox="0 0 34 34" fill="none" stroke="#f2f2f2" stroke-width="2"><path d="M24 2H3V26H24"/><path d="M8 31H22M13 26V31"/><rect x="24" y="1" width="8" height="12" rx="4"/><path d="M28 13V33"/><path d="M7 1L13 3V12C13 16 9 18 7 19C5 18 1 16 1 12V3Z" fill="#e57a5f" stroke="none"/><circle cx="7" cy="9" r="2" fill="#222"/></svg>
      <svg width="32" height="30" viewBox="0 0 32 30" fill="none" stroke="#f2f2f2" stroke-width="2"><path d="M1 10H7L14 3V27L7 20H1Z"/><path d="M19 10C21 13 21 17 19 20"/><path d="M23 6C27 11 27 19 23 24M27 2C33 10 33 20 27 28" stroke="#777"/></svg>
      <svg width="34" height="32" viewBox="0 0 34 32"><rect x="1" y="7" width="28" height="24" rx="4" fill="none" stroke="#f2f2f2" stroke-width="2"/><rect x="30" y="15" width="3" height="8" fill="#f2f2f2"/><path d="M12 12H24V26H6Z" fill="#f2f2f2"/><path d="M6 0L2 12H7L5 20L13 7H8Z" fill="#f2f2f2" stroke="#222"/></svg>
      <div class="tray-clock"><span>11:53 AM</span><span>7/31/2023</span></div>
    </div>
  </footer>
</div>
</body>
</html>
```

FILE: styles.css
```css
* { box-sizing: border-box; }
html, body { margin: 0; padding: 0; background: #000; }
.defs { position: absolute; }
svg { display: block; flex: none; }

.screen { width: 2880px; height: 1800px; display: flex; flex-direction: column; overflow: hidden; }

/* macOS menu bar */
.menubar { height: 48px; flex: none; display: flex; align-items: center; padding-bottom: 2px; color: #f0eef8; font-family: Inter, "Liberation Sans", sans-serif; font-size: 25.5px; background: linear-gradient(90deg, #261a94 0%, #2a1a9a 50%, #1f1580 85%, #1a1268 100%); }
.app-menu { display: flex; align-items: center; gap: 41.5px; padding-left: 40px; }
.apple { margin-right: -2px; margin-top: -3px; }
.app-name { font-weight: 700; font-size: 26px; margin-right: 1px; }
.status-strip { margin-left: auto; display: grid; grid-template-columns: 71px 68px 68px 72px 195px 72px 80px 58px 82px 74px 80px 82px 58px 78px 316px; justify-items: center; align-items: center; height: 46px; }
.temp-group { display: flex; align-items: center; gap: 11px; }
.temp-text { display: flex; flex-direction: column; font-size: 18px; font-weight: 600; line-height: 22px; }
.clock { justify-self: start; padding-left: 11px; white-space: pre; font-size: 27.2px; }

/* Parallels title bar */
.vm-titlebar { height: 78px; flex: none; position: relative; display: flex; align-items: center; justify-content: center; padding-top: 2px; background: #3a393e; border-top: 2px solid #6a696c; border-bottom: 2px solid #111; border-radius: 16px 16px 0 0; box-shadow: 0 -2px 0 #000; }
.traffic { position: absolute; left: 26px; top: 26px; display: flex; gap: 16px; }
.light { width: 24px; height: 24px; border-radius: 50%; }
.light-red { background: #ef6b62; }
.light-amber { background: #f5be4f; }
.light-green { background: #62c554; }
.light-blue { background: #63b0ee; }
.vm-title { color: #a9a8ab; font-family: "Liberation Sans", sans-serif; font-size: 31.5px; }
.vm-tools { position: absolute; right: 19px; top: 19px; display: flex; align-items: center; gap: 26px; }

/* NoMachine title bar */
.nm-titlebar { height: 46px; flex: none; display: flex; align-items: center; background: #f3f2f6; color: #111; font-family: "Open Sans", sans-serif; font-size: 24px; padding-left: 2px; }
.nm-title { margin-left: 5px; }
.nm-controls { margin-left: auto; display: flex; align-items: center; gap: 69px; padding-right: 39px; }
.nm-restore { margin-right: 6px; }

/* GNOME top bar */
.gnome-bar { height: 54px; flex: none; display: grid; grid-template-columns: 1fr auto 1fr; align-items: center; background: #111; color: #e6e6e6; font-family: "Noto Sans", sans-serif; font-size: 28px; }
.gnome-left { display: flex; align-items: center; gap: 70px; padding-left: 36px; }
.activities { font-size: 30px; }
.gnome-app { display: flex; align-items: center; gap: 12px; }
.gnome-center { display: flex; align-items: center; gap: 36px; padding-left: 212px; }
.gnome-clock { white-space: pre; font-size: 28.5px; }
.gnome-right { display: flex; align-items: center; justify-content: flex-end; gap: 28px; padding-right: 36px; }
.lang { margin: 0 39px 0 33px; }

/* Desktop */
.desktop { flex: 1; position: relative; display: flex; overflow: hidden; background: #3a1028; }
.wallpaper { position: absolute; inset: 0; width: 100%; height: 100%; }

/* Dock */
.dock { position: relative; width: 148px; flex: none; display: flex; flex-direction: column; padding-top: 26px; background: linear-gradient(180deg, #14080f 0%, #170b14 50%, #281822 100%); border-left: 2px solid #4a474a; }
.dock-item { position: relative; height: 132px; flex: none; display: flex; align-items: center; justify-content: center; margin-left: -2px; }
.has-dot::before { content: ""; position: absolute; left: 10px; top: 50%; width: 11px; height: 9px; margin-top: -4px; border-radius: 50%; background: #d95a28; }
.dim-dot::before { background: #6a3420; }
.dock-item-trash { height: 120px; padding-top: 21px; align-items: flex-start; }
.dock-item-trash::before { top: 54%; }
.dock-sep { height: 34px; flex: none; display: flex; align-items: center; margin: 0 26px 0 24px; }
.dock-sep::before { content: ""; flex: 1; height: 2px; background: #5a5257; }
.is-active .active-plate { width: 128px; height: 128px; border-radius: 24px; background: #454145; display: flex; align-items: center; justify-content: center; }
.has-dots::before { content: ""; position: absolute; left: 11px; top: 50%; width: 9px; height: 9px; margin-top: -21px; background: #e05a3a; box-shadow: 0 17px 0 #dc6230, 0 34px 0 #dc6230; }
.app-grid { display: grid; grid-template-columns: repeat(3, 12px); grid-auto-rows: 12px; gap: 12px; justify-content: center; margin-left: -2px; }
.app-grid i { background: #f4eef2; border-radius: 2px; }

/* Tk window */
.tk-window { position: absolute; left: 952px; top: 28px; width: 1020px; height: 1364px; display: flex; flex-direction: column; background: #d9d9d9; border-radius: 24px 24px 0 0; box-shadow: 0 10px 40px rgba(0, 0, 0, .55); overflow: hidden; color: #1c1c1c; font-family: "Liberation Sans", sans-serif; font-size: 24.5px; }
.tk-titlebar { height: 75px; flex: none; position: relative; display: flex; align-items: center; justify-content: center; background: #eae9ec; border-bottom: 2px solid #a8a7a9; }
.tk-titlebar h1 { margin: 0; font-family: "Noto Sans", sans-serif; font-size: 30px; font-weight: 700; color: #3d3a3d; }
.tk-controls { position: absolute; right: 15px; top: 15px; display: flex; gap: 25px; }
.tk-ctl { width: 43px; height: 43px; border-radius: 50%; background: #dfdee1; display: flex; align-items: center; justify-content: center; }
.tk-body { flex: 1; display: flex; flex-direction: column; padding: 12px 7px 0 9px; }

.frame { margin: 0; padding: 7px 3px 8px 4px; min-width: 0; border: 1px solid #8a8a8a; box-shadow: inset 0 0 0 1px #fff; display: flex; flex-direction: column; }
.frame legend { margin-left: 9px; padding: 0 2px 0 0; height: 40px; line-height: 32px; background: #d9d9d9; font-family: "DejaVu Sans", sans-serif; font-size: 31.6px; color: #222; }
.frame-file { padding-top: 5px; padding-bottom: 10px; gap: 13px; }
.frame-mol { margin-top: 26px; padding-top: 6px; padding-bottom: 9px; gap: 13px; }
.frame-inp { margin-top: 22px; padding-bottom: 9px; }
.frame-out { margin-top: 22px; }

.row { display: flex; align-items: center; gap: 11px; }
.row-wide-gap { gap: 14px; }
.row-browse .entry { margin-right: -6px; }
.row-browse .btn-browse { flex: none; }
.row-radio { margin-top: 13px; height: 26px; gap: 18px; }
.row-point { margin-top: 15px; gap: 15px; }
.row-endrad { margin-top: 14px; gap: 13px; }
.row-vector { gap: 10px; }
.lbl { white-space: nowrap; margin-top: -5px; }
.row-radio .lbl { margin-top: 0; }

.entry { height: 33px; background: #fff; border-style: solid; border-width: 2px 1px 1px 1px; border-color: #8a8a8a #ececec #ececec #8a8a8a; font-size: 24.5px; line-height: 24px; padding-left: 3px; color: #1c1c1c; min-width: 0; white-space: nowrap; }
.grow { flex: 1; }
.entry-step { width: 147px; }
.triple { display: flex; }
.triple-vector { gap: 4px; }
.triple-vector .entry { width: 232px; }
.triple-point { gap: 5px; }
.triple-point .entry { width: 175px; }

.btn { margin: 0; padding: 0 3px 5px 0; background: #d9d9d9; color: #1c1c1c; font-family: "Liberation Sans", sans-serif; font-size: 24.5px; border-style: solid; border-width: 2px 1px 3px 1px; border-color: #fff #8a8a8a #8a8a8a #fff; }
.btn-browse { width: 133px; height: 49px; }
.btn-sim { width: 147px; height: 48px; margin-left: 29px; }
.btn-wide { width: 1003px; height: 48px; flex: none; }
.btn-load { margin-top: 23px; }
.btn-next { margin-top: 26px; }
.btn-run { margin-top: 25px; }

.radios { display: flex; align-items: center; gap: 23px; }
.radio { display: flex; align-items: center; gap: 10px; }
.dot { width: 20px; height: 20px; margin-top: 1px; border-radius: 50%; background: #fff; border-style: solid; border-width: 1px; border-color: #8a8a8a #eee #eee #8a8a8a; display: flex; align-items: center; justify-content: center; }
.dot.is-on::after { content: ""; width: 8px; height: 8px; border-radius: 50%; background: #111; }
.subhead { margin: 19px 0 0; height: 40px; line-height: 40px; font-family: "DejaVu Sans", sans-serif; font-size: 31.3px; font-weight: 400; color: #222; }

/* Activate Windows watermark */
.activate { position: absolute; left: 2304px; top: 1309px; color: rgba(255, 255, 255, .3); font-family: "Open Sans", sans-serif; }
.activate p { margin: 0; white-space: nowrap; }
.activate-head { font-size: 38.3px; line-height: 56px; }
.activate-sub { font-size: 27.8px; line-height: 40px; }

/* Windows taskbar */
.taskbar { height: 96px; flex: none; position: relative; display: flex; align-items: center; background: #202124; border-top: 2px solid #454548; font-family: "Open Sans", sans-serif; }
.task-center { display: flex; align-items: center; margin-left: 1060px; }
.search { width: 439px; height: 64px; margin-left: 27px; padding: 0 8px 2px 24px; display: flex; align-items: center; gap: 18px; border-radius: 32px; background: #404044; border: 2px solid #4e4e52; color: #d8d8d8; font-size: 26.5px; }
.bing { margin-left: auto; }
.task-folder { margin-left: 25px; }
.task-firefox { position: relative; margin-left: 43px; display: block; }
.task-running { position: absolute; left: 16px; top: 55px; width: 10px; height: 6px; border-radius: 3px; background: #9a9a9c; }
.task-active { position: relative; margin-left: 28px; width: 70px; height: 80px; padding-left: 6px; display: flex; align-items: center; justify-content: center; background: #2b2b2f; border-radius: 8px; box-shadow: 8px 0 0 -1px #2b2b2f; }
.task-open { position: absolute; left: 23px; bottom: 2px; width: 32px; height: 6px; border-radius: 3px; background: #e8806a; }
.tray { margin-left: auto; display: flex; align-items: center; gap: 16px; padding-right: 38px; color: #f2f2f2; }
.tray > svg:first-child { margin-right: 21px; }
.tray-clock { display: flex; flex-direction: column; align-items: flex-end; font-size: 23.6px; line-height: 32px; margin: -3px 0 0 10px; }
```
